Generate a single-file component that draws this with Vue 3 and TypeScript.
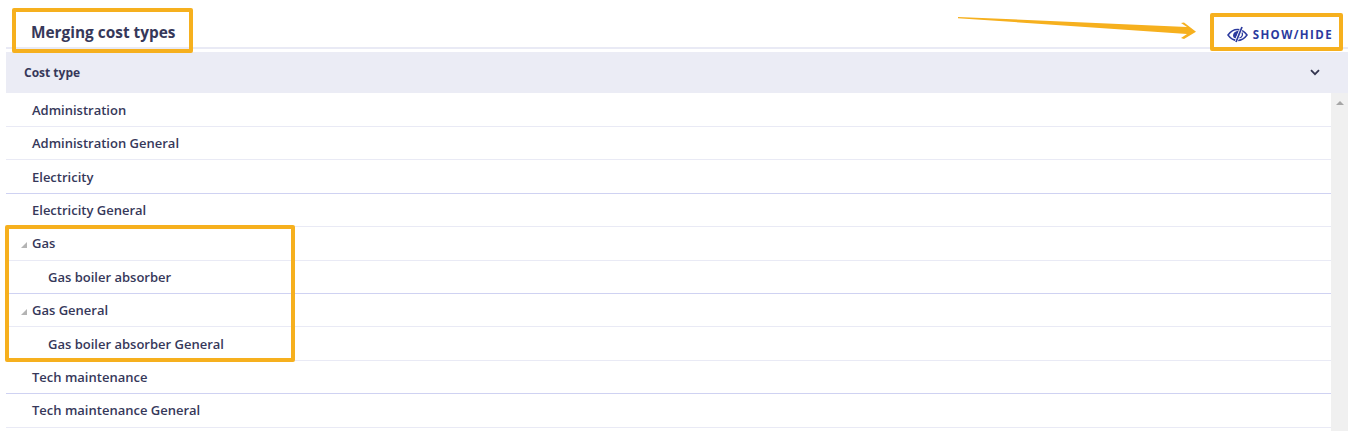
<script setup lang="ts">
type Row = { label: string; child?: boolean; open?: boolean; strong?: boolean };

const rows: Row[] = [
  { label: "Administration" },
  { label: "Administration General" },
  { label: "Electricity", strong: true },
  { label: "Electricity General" },
  { label: "Gas", open: true },
  { label: "Gas boiler absorber", child: true, strong: true },
  { label: "Gas General", open: true },
  { label: "Gas boiler absorber General", child: true },
  { label: "Tech maintenance", strong: true },
  { label: "Tech maintenance General" },
];
</script>

<template>
  <div class="page">
    <div class="topbar">
      <h1 class="title">Merging cost types</h1>
      <button class="show-hide">
        <svg class="eye" width="21" height="17" viewBox="0 0 21 17">
          <path d="M1 9C3.500 5.500 6.500 3.500 10.500 3.500c4 0 7 2 9.500 5.500-2.500 3.500-5.500 5.500-9.500 5.500S3.500 12.500 1 9z" fill="none" stroke="#2b3a9e" stroke-width="1.500" />
          <path d="M6 9.500C6 7 8 5 12 4.500L8.500 12.500C7 12 6 11 6 9.500z" fill="#2b3a9e" />
          <path d="M15 1L9 16" stroke="#fff" stroke-width="3" />
          <path d="M15 1L9 16" stroke="#2b3a9e" stroke-width="1.700" />
          <path d="M15 6.500c1 2 .5 4.500-2.500 5.500" fill="none" stroke="#2b3a9e" stroke-width="1.300" />
        </svg>
        <span>SHOW/HIDE</span>
      </button>
    </div>
    <div class="table-head">
      <span>Cost type</span>
      <svg width="10" height="7" viewBox="0 0 10 7">
        <path d="M1 1.200L5 5.200L9 1.200" fill="none" stroke="#33354f" stroke-width="1.800" />
      </svg>
    </div>
    <div class="table-body">
      <div class="rows">
        <div v-for="row in rows" :key="row.label" class="row" :class="{ child: row.child, strong: row.strong }">
          <i v-if="row.open" class="caret"></i>
          <span>{{ row.label }}</span>
        </div>
      </div>
      <div class="scrollbar"><i class="scroll-up"></i></div>
    </div>

    <div class="mark mark-title"></div>
    <div class="mark mark-button"></div>
    <div class="mark mark-gas"></div>
    <svg class="arrow" width="242" height="24" viewBox="0 0 242 24">
      <path d="M1 1L1 2.200L230 18L224 22L227 23L239 15.700L227 6.500L224 7L230 11z" fill="#f6b01e" />
    </svg>
  </div>
</template>

<style>
body {
  background: #fff;
  overflow: hidden;
}
</style>

<style scoped>
.page {
  position: relative;
  width: 1359px;
  height: 431px;
  overflow: hidden;
  padding: 0 11px 0 6px;
  box-sizing: border-box;
  font-family: "Open Sans", "Liberation Sans", sans-serif;
  color: #36385a;
}

.topbar {
  display: flex;
  justify-content: space-between;
  align-items: flex-end;
  height: 49px;
  margin-bottom: 3px;
  padding-left: 14px;
  border-bottom: 2px solid #e9eaf5;
  box-sizing: border-box;
}

.title {
  margin: 0 0 3px 11px;
  font-size: 15.400px;
  font-weight: 700;
  line-height: 22px;
}

.show-hide {
  display: flex;
  align-items: center;
  gap: 5px;
  margin: 0 15px 4px 0;
  padding: 0;
  border: 0;
  background: none;
  font-family: inherit;
  font-size: 11.500px;
  font-weight: 700;
  letter-spacing: 1.400px;
  color: #2b3a9e;
}

.table-head {
  display: flex;
  justify-content: space-between;
  align-items: center;
  height: 41px;
  padding: 0 28px 0 18px;
  background: #ebecf5;
  font-size: 12px;
  font-weight: 700;
}

.table-body {
  display: flex;
}

.rows {
  flex: 1;
  padding-top: 0.600px;
}

.row {
  position: relative;
  display: flex;
  align-items: center;
  height: 33.400px;
  box-sizing: border-box;
  padding-left: 26px;
  border-bottom: 1px solid #e9eaf5;
  font-size: 13px;
  font-weight: 600;
}

.row.strong {
  border-bottom-color: #cfd2f2;
}

.row.child {
  padding-left: 42px;
}

.caret {
  position: absolute;
  left: 15px;
  top: 15px;
  width: 0;
  height: 0;
  border-left: 6px solid transparent;
  border-bottom: 6px solid #b4b4b4;
}

.scrollbar {
  width: 17px;
  height: 340px;
  background: #f0f0f0;
}

.scroll-up {
  display: block;
  width: 0;
  height: 0;
  margin: 8px auto 0;
  border: 4px solid transparent;
  border-top: 0;
  border-bottom: 4px solid #a6a6a6;
}

.mark {
  position: absolute;
  box-sizing: border-box;
  border: 4px solid #f6b01e;
  border-radius: 2px;
}

.mark-title {
  left: 12px;
  top: 8px;
  width: 181px;
  height: 45px;
}

.mark-button {
  left: 1210px;
  top: 13px;
  width: 133px;
  height: 38px;
}

.mark-gas {
  left: 5px;
  top: 225px;
  width: 290px;
  height: 137px;
}

.arrow {
  position: absolute;
  left: 957px;
  top: 16px;
}
</style>
